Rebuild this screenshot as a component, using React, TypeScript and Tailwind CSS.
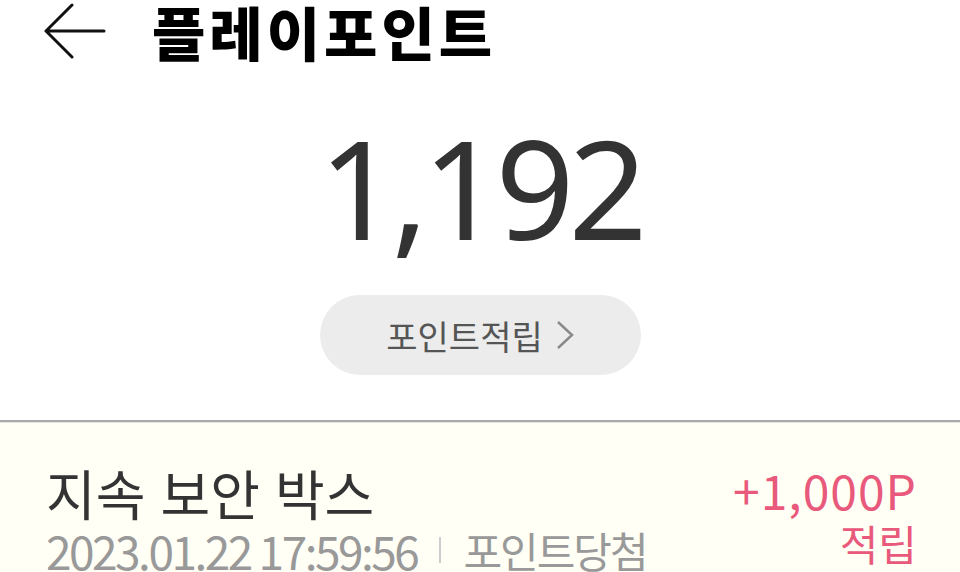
import React from "react";

const font = { fontFamily: '"Noto Sans CJK KR", "Noto Sans", sans-serif' };

function BackArrow() {
  return (
    <svg width="64" height="56" viewBox="0 0 64 56" fill="none">
      <path
        d="M4 28 H62 M30 2 L4 28 L30 54"
        stroke="#111"
        strokeWidth="3"
        strokeLinecap="round"
        strokeLinejoin="round"
      />
    </svg>
  );
}

export default function App() {
  return (
    <div
      className="w-[960px] h-[572px] overflow-hidden bg-white flex flex-col"
      style={font}
    >
      <div className="h-[62px] shrink-0 flex items-center pl-[42px]">
        <BackArrow />
        <h1 className="ml-[46px] text-[58px] leading-none font-black text-black tracking-[4px]">
          플레이포인트
        </h1>
      </div>

      <div className="flex flex-col items-center shrink-0">
        <div className="mt-[55px] text-[138px] leading-none font-normal text-[#333333] tracking-[-6px] font-['Noto_Sans']">
          1,192
        </div>
        <button className="mt-[40px] w-[321px] h-[80px] rounded-full bg-[#ececec] flex items-center justify-center gap-[13px]">
          <span className="text-[34px] text-[#555555]">포인트적립</span>
          <svg width="18" height="30" viewBox="0 0 18 30" fill="none">
            <path d="M2 2 L16 15 L2 28" stroke="#8a8a8a" strokeWidth="2.5" />
          </svg>
        </button>
      </div>

      <div className="mt-[45px] h-[2px] shrink-0 bg-[#aaaaaa]" />
      <div className="h-[1px] shrink-0 bg-[#e4e4e4]" />
      <div className="flex-1 bg-[#fffff6] flex justify-between pl-[46px] pr-[43px] pt-[40px]">
        <div className="flex flex-col">
          <div className="text-[54px] leading-[59px] text-[#333333] [word-spacing:3px] whitespace-nowrap">
            지속 보안 박스
          </div>
          <div className="flex items-center text-[46px] leading-[56px] text-[#999999] whitespace-nowrap">
            <span className="tracking-[-2.5px]">2023.01.22 17:59:56</span>
            <span className="mx-[22px] w-[2px] h-[26px] bg-[#cccccc]" />
            <span className="text-[42px] tracking-[-2px]">포인트당첨</span>
          </div>
        </div>
        <div className="flex flex-col items-end text-[#e8597c]">
          <div className="text-[48px] leading-[52px] tracking-[1px]">+1,000P</div>
          <div className="text-[42px] leading-[52px] mt-[2px]">적립</div>
        </div>
      </div>
    </div>
  );
}
